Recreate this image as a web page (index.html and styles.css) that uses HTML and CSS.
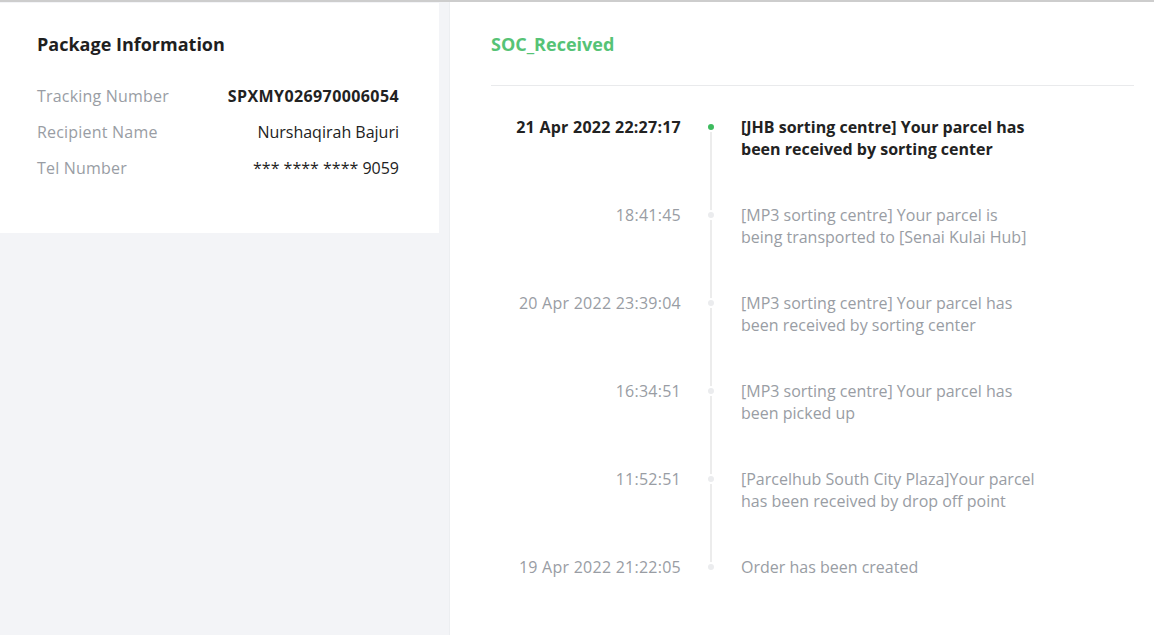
FILE: index.html
```html
<!DOCTYPE html>
<html lang="en">
<head>
<meta charset="utf-8">
<title>Tracking</title>
<link rel="stylesheet" href="styles.css">
</head>
<body>
<div class="page">
  <aside class="side">
    <section class="card">
      <h2 class="card-title">Package Information</h2>
      <div class="info">
        <div class="info-row"><span class="label">Tracking Number</span><span class="value strong">SPXMY026970006054</span></div>
        <div class="info-row"><span class="label">Recipient Name</span><span class="value">Nurshaqirah Bajuri</span></div>
        <div class="info-row"><span class="label">Tel Number</span><span class="value">*** **** **** 9059</span></div>
      </div>
    </section>
  </aside>
  <main class="main">
    <h2 class="status">SOC_Received</h2>
    <div class="divider"></div>
    <ul class="timeline">
      <li class="event current">
        <div class="time">21 Apr 2022 22:27:17</div>
        <div class="axis"><span class="dot"></span><span class="line"></span></div>
        <div class="desc">[JHB sorting centre] Your parcel has been received by sorting center</div>
      </li>
      <li class="event">
        <div class="time">18:41:45</div>
        <div class="axis"><span class="dot"></span><span class="line"></span></div>
        <div class="desc">[MP3 sorting centre] Your parcel is being transported to [Senai Kulai Hub]</div>
      </li>
      <li class="event">
        <div class="time">20 Apr 2022 23:39:04</div>
        <div class="axis"><span class="dot"></span><span class="line"></span></div>
        <div class="desc">[MP3 sorting centre] Your parcel has been received by sorting center</div>
      </li>
      <li class="event">
        <div class="time">16:34:51</div>
        <div class="axis"><span class="dot"></span><span class="line"></span></div>
        <div class="desc">[MP3 sorting centre] Your parcel has been picked up</div>
      </li>
      <li class="event">
        <div class="time">11:52:51</div>
        <div class="axis"><span class="dot"></span><span class="line"></span></div>
        <div class="desc">[Parcelhub South City Plaza]Your parcel has been received by drop off point</div>
      </li>
      <li class="event last">
        <div class="time">19 Apr 2022 21:22:05</div>
        <div class="axis"><span class="dot"></span></div>
        <div class="desc">Order has been created</div>
      </li>
    </ul>
  </main>
</div>
</body>
</html>
```
FILE: styles.css
```css
* { box-sizing: border-box; }
html, body { margin: 0; padding: 0; height: 100%; }
body {
  font-family: "Open Sans", "Liberation Sans", sans-serif;
  font-size: 16px;
  color: #222;
  background: #fff;
  overflow: hidden;
}
.page {
  display: flex;
  height: 100%;
  border-top: 2px solid #cdcdcd;
}
.side {
  width: 450px;
  flex: none;
  background: #f3f4f7;
  padding-top: 1px;
  border-right: 1px solid #eceef1;
}
.card {
  width: 439px;
  background: #fff;
  padding: 29px 40px 47px 37px;
}
.card-title {
  margin: 0;
  font-size: 18px;
  line-height: 24px;
  font-weight: 700;
  color: #1f1f1f;
}
.info { margin-top: 22px; }
.info-row {
  display: flex;
  justify-content: space-between;
  line-height: 36px;
}
.label { color: #999da4; letter-spacing: 0.2px; }
.value { color: #222; }
.value.strong { font-weight: 700; letter-spacing: 0.4px; }

.main {
  flex: 1;
  padding: 1px 20px 0 41px;
}
.status {
  margin: 29px 0 0;
  font-size: 18px;
  line-height: 24px;
  font-weight: 700;
  color: #56c376;
}
.divider {
  height: 1px;
  background: #e9eaec;
  margin-top: 29px;
}
.timeline {
  list-style: none;
  margin: 30px 0 0;
  padding: 0;
}
.event {
  display: flex;
  line-height: 22px;
  color: #999da4;
}
.time {
  width: 190px;
  flex: none;
  text-align: right;
  padding-bottom: 44px;
  letter-spacing: 0.25px;
}
.axis {
  width: 60px;
  flex: none;
  display: flex;
  flex-direction: column;
  align-items: center;
}
.dot {
  display: block;
  width: 10px;
  height: 10px;
  margin-top: 6px;
  border-radius: 50%;
  background: #ebecee;
  border: 2px solid #fff;
}
.line {
  display: block;
  flex: 1;
  width: 2px;
  background: #ececec;
  margin-bottom: -8px;
}
.desc {
  width: 298px;
  padding-bottom: 44px;
}
.current { font-weight: 700; }
.current .dot { background: #3dbb5e; }
.current .time, .current .desc { color: #222; }
```
